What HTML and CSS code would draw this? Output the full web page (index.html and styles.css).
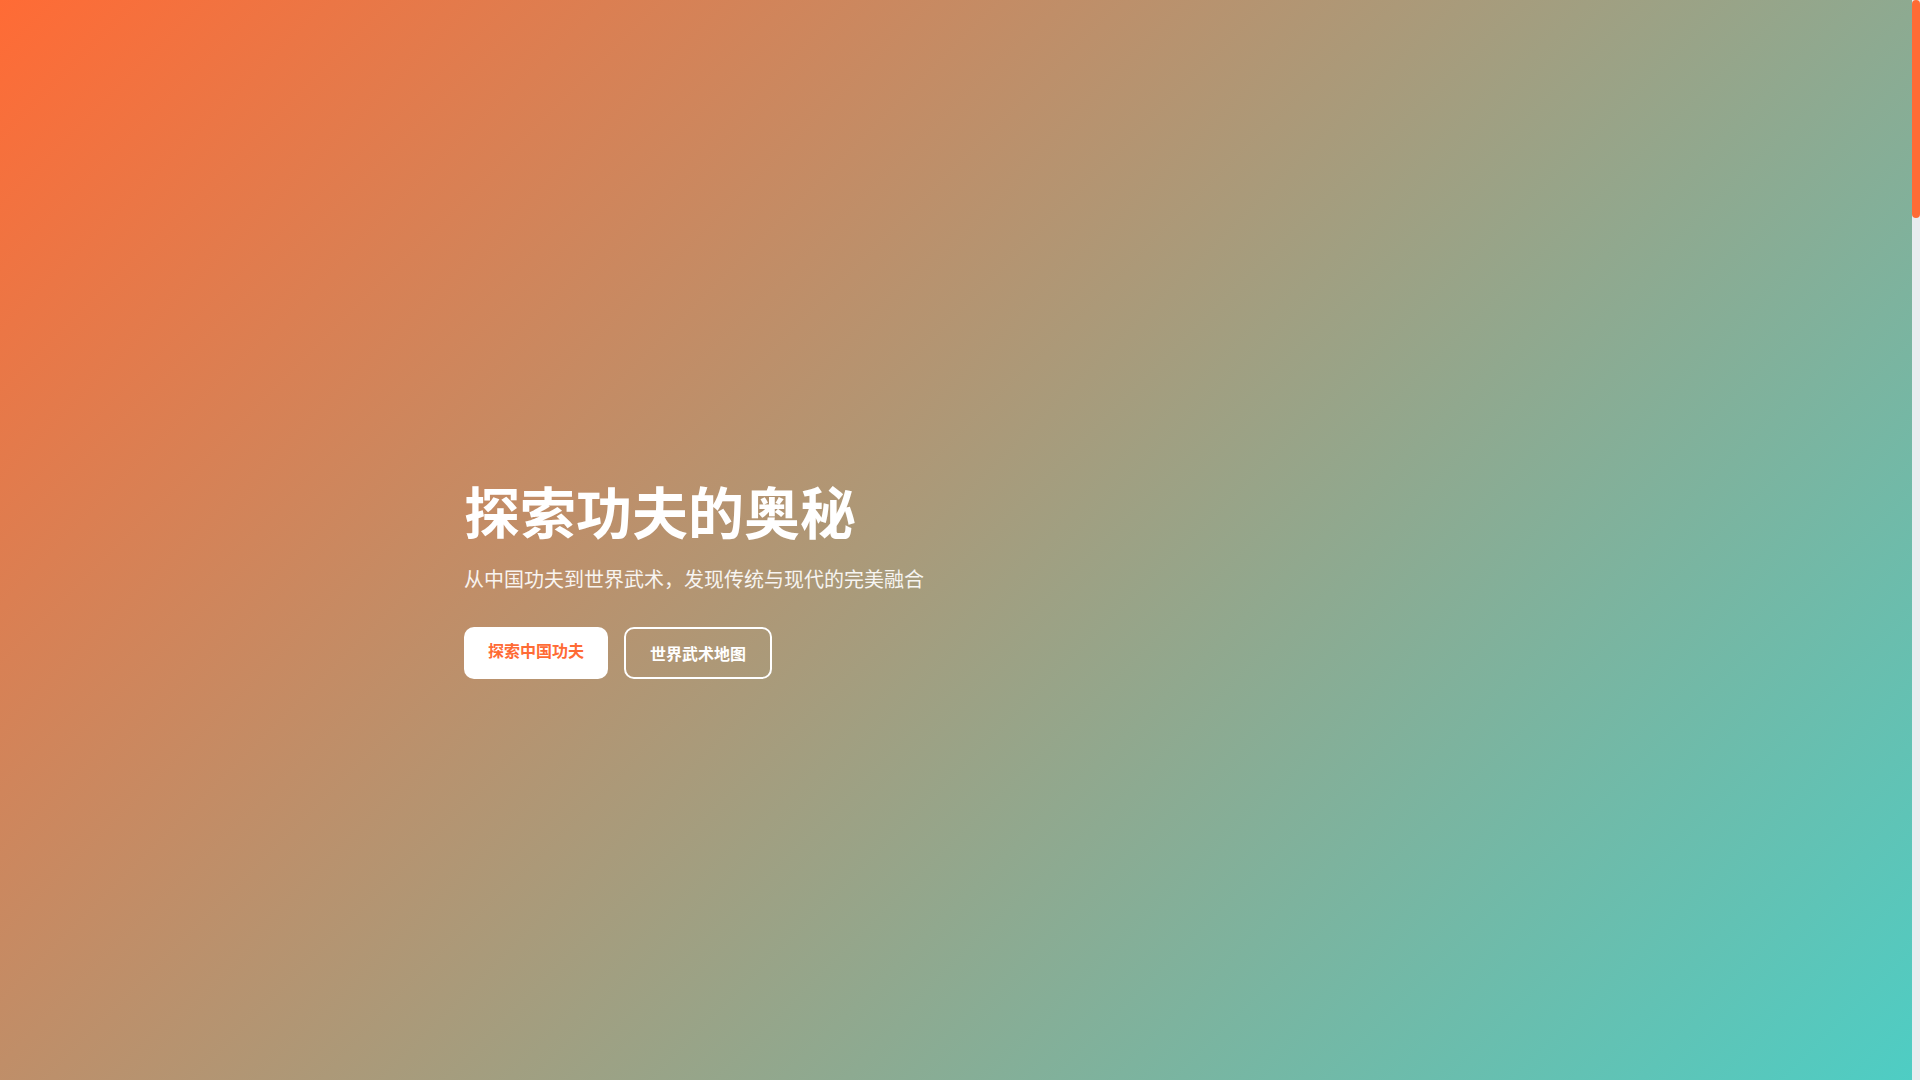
FILE: index.html
```html
<!DOCTYPE html>
<html lang="zh-CN">
<head>
<meta charset="UTF-8">
<title>探索功夫的奥秘</title>
<link rel="stylesheet" href="styles.css">
</head>
<body>
<div class="page">
  <section class="hero">
    <div class="container">
      <h1 class="hero-title">探索功夫的奥秘</h1>
      <p class="hero-subtitle">从中国功夫到世界武术，发现传统与现代的完美融合</p>
      <div class="hero-buttons">
        <a class="btn btn-primary" href="#china">探索中国功夫</a>
        <a class="btn btn-outline" href="#map">世界武术地图</a>
      </div>
    </div>
  </section>
  <section class="more" id="china"></section>
</div>
<div class="scrollbar" aria-hidden="true">
  <div class="scrollbar-thumb"></div>
</div>
</body>
</html>
```

FILE: styles.css
```css
* {
  box-sizing: border-box;
  margin: 0;
  padding: 0;
}

html,
body {
  height: 100%;
  overflow: hidden;
}

html {
  font-family: "Noto Sans CJK SC", "Noto Sans", sans-serif;
}

body {
  margin: 0;
  display: flex;
  background: #ffffff;
  color: #333333;
}

.page {
  flex: 1;
  min-width: 0;
  height: 100vh;
  overflow: hidden;
}

.scrollbar {
  flex: 0 0 8px;
  width: 8px;
  height: 100vh;
  background: #e9ecef;
}

.scrollbar-thumb {
  height: 218px;
  background: #ff6b35;
  border-radius: 4px;
}

.hero {
  height: 100vh;
  display: flex;
  align-items: center;
  padding-top: 75px;
  background: linear-gradient(135deg, #ff6b35 0%, #4ecdc4 100%);
  color: #ffffff;
}

.container {
  width: 100%;
  max-width: 1024px;
  margin: 0 auto;
  padding: 0 20px;
}

.hero-title {
  font-size: 56px;
  font-weight: 700;
  line-height: 1.2;
  margin-bottom: 19px;
}

.hero-subtitle {
  font-size: 20px;
  line-height: 1.6;
  opacity: 0.9;
  margin-bottom: 32px;
}

.hero-buttons {
  display: flex;
  gap: 16px;
}

.btn {
  display: inline-block;
  font-size: 16px;
  line-height: 20px;
  font-weight: 600;
  text-decoration: none;
  border-radius: 10px;
}

.btn-primary {
  background: #ffffff;
  color: #ff6b35;
  padding: 13px 24px 19px;
}

.btn-outline {
  color: #ffffff;
  border: 2px solid #ffffff;
  padding: 14px 24px;
}

.more {
  height: 4270px;
  background: #ffffff;
}
```
